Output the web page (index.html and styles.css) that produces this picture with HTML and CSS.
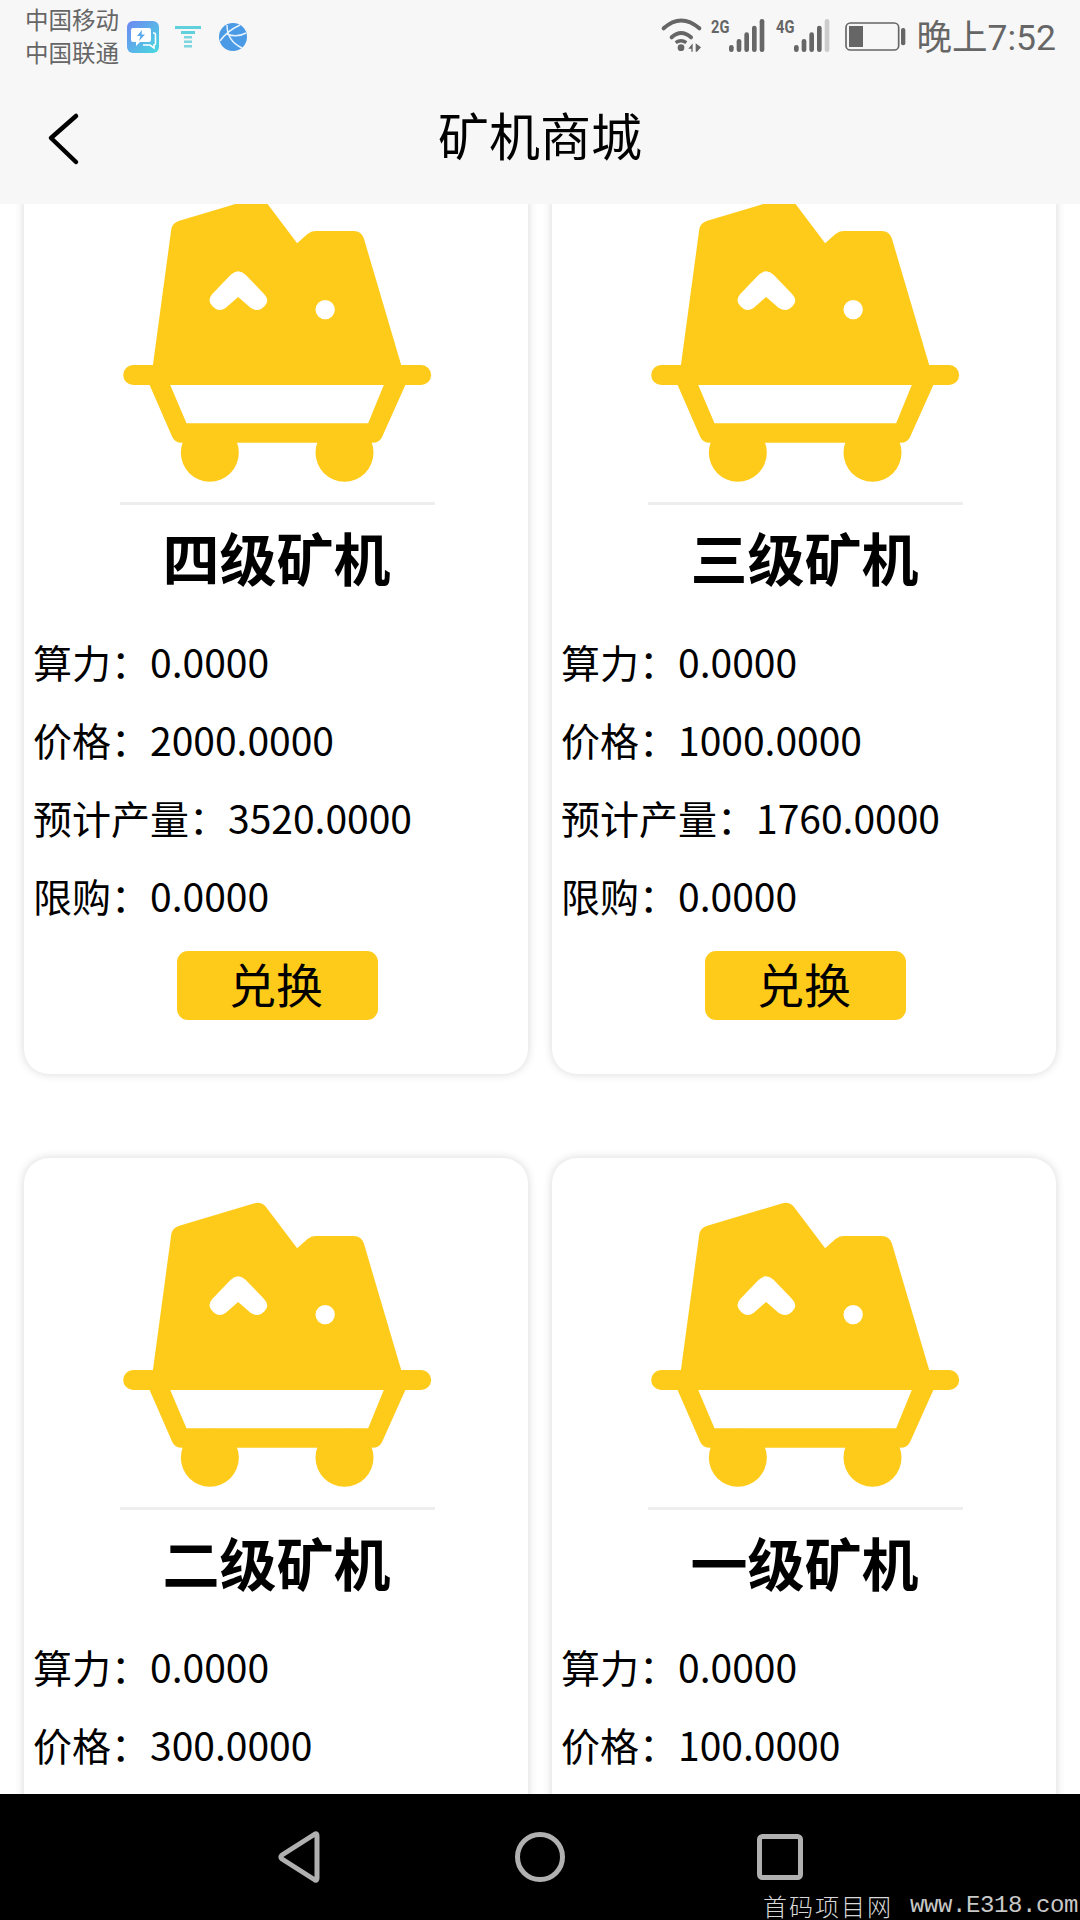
FILE: index.html
```html
<!DOCTYPE html>
<html lang="zh-CN">
<head>
<meta charset="utf-8">
<title>矿机商城</title>
<link rel="stylesheet" href="styles.css">
</head>
<body>
<svg class="defs" aria-hidden="true">
  <defs>
    <linearGradient id="chatGrad" x1="0" y1="0" x2="1" y2="1">
      <stop offset="0" stop-color="#6f86f2"/>
      <stop offset="1" stop-color="#47dcdf"/>
    </linearGradient>
  </defs>
  <symbol id="cart" viewBox="-7.5 0 1080 981">
    <path fill="#ffcb1b" d="M156 580 L212 165 Q214 145 234 138 L462 70 Q482 64 496 80 L590 205 L620 178 Q632 168 645 168 L760 168 Q782 168 790 190 L905 580 Z"/>
    <rect fill="#ffcb1b" x="68" y="570" width="924" height="60" rx="30"/>
    <path fill="#ffcb1b" d="M145 625 L215 785 Q222 803 245 803 L815 803 Q838 803 845 785 L917 625 L852 625 L803 745 L258 745 L207 625 Z"/>
    <circle fill="#ffcb1b" cx="328" cy="833" r="87"/>
    <circle fill="#ffcb1b" cx="732" cy="833" r="87"/>
    <path fill="#fff" d="M413 366 L376 398 Q354 414 336 394 Q318 376 336 356 L390 300 Q413 278 436 300 L490 356 Q510 376 492 394 Q474 414 450 398 Z"/>
    <circle fill="#fff" cx="674" cy="404" r="29"/>
  </symbol>
</svg>

<header class="top">
  <div class="status">
    <div class="carriers">
      <span>中国移动</span>
      <span>中国联通</span>
    </div>
    <svg class="app-chat" viewBox="0 0 32 32">
      <rect width="32" height="32" rx="6" fill="url(#chatGrad)"/>
      <path fill="#fff" d="M6 7 H22 Q24 7 24 9 V19 Q24 21 22 21 H13 L9 25 V21 H6 Q4 21 4 19 V9 Q4 7 6 7 Z"/>
      <path fill="none" stroke="#fff" stroke-width="1.6" d="M26 12 H27 Q28.500 12 28.500 14 V22 Q28.500 24 27 24 V27 L23 24 H16"/>
      <path fill="#5aa8ee" d="M15 9 L10 15 H13.500 L12 20 L18 13.500 H14.500 Z"/>
    </svg>
    <svg class="app-filter" viewBox="0 0 26 24">
      <rect x="0" y="1" width="26" height="3" fill="#5fd0dc"/>
      <rect x="6" y="6" width="14" height="3" fill="#5fd0dc"/>
      <rect x="9" y="11" width="8" height="2.500" fill="#7bd6e0"/>
      <rect x="9" y="15.500" width="8" height="2.500" fill="#7bd6e0"/>
      <rect x="9" y="20" width="8" height="2.500" fill="#7bd6e0"/>
    </svg>
    <svg class="app-globe" viewBox="0 0 28 28">
      <circle cx="14" cy="14" r="14" fill="#4a9ae6"/>
      <path fill="none" stroke="#e6f2fc" stroke-width="1.500" d="M1 18 Q8 8 21 2 M8 2 Q8 18 23 25 M8 11 Q18 15 27 10"/>
    </svg>
    <svg class="sys-icons" viewBox="0 0 780 150">
      <g fill="none" stroke="#666" stroke-width="12" stroke-linecap="round">
        <path d="M38 55 Q90 8 145 55"/>
        <path d="M62 82 Q90 56 120 82"/>
      </g>
      <path fill="none" stroke="#666" stroke-width="10" d="M74 98 Q90 86 106 98"/>
      <circle cx="90" cy="113" r="10" fill="#666"/>
      <path fill="#666" d="M112 116 L125 100 V125 H121 V116 Z M134 100 L150 112 L138 125 H134 Z"/>
      <text class="net" x="180" y="68" textLength="55" lengthAdjust="spacingAndGlyphs">2G</text>
      <g stroke="#666" stroke-width="14" stroke-linecap="round">
        <path d="M241 112 V119"/>
        <path d="M264 94 V119"/>
        <path d="M287 74 V119"/>
        <path d="M310 54 V119"/>
        <path d="M333 34 V119"/>
      </g>
      <text class="net" x="375" y="68" textLength="55" lengthAdjust="spacingAndGlyphs">4G</text>
      <g stroke="#666" stroke-width="14" stroke-linecap="round">
        <path d="M436 112 V119"/>
        <path d="M459 94 V119"/>
        <path d="M482 74 V119"/>
        <path d="M505 54 V119"/>
      </g>
      <path stroke="#ccc" stroke-width="14" stroke-linecap="round" d="M528 34 V119"/>
      <rect x="585" y="39" width="158" height="81" rx="13" fill="none" stroke="#666" stroke-width="5"/>
      <rect x="594" y="48" width="42" height="63" fill="#666"/>
      <rect x="750" y="54" width="13" height="52" rx="6" fill="#666"/>
    </svg>
    <span class="clock">晚上7:52</span>
  </div>
  <div class="titlebar">
    <svg class="back" viewBox="0 0 36 58">
      <path d="M30 5 L5 27 L30 51" fill="none" stroke="#000" stroke-width="4.500" stroke-linecap="round" stroke-linejoin="round"/>
    </svg>
    <h1 class="page-title">矿机商城</h1>
  </div>
</header>

<main class="shop">
  <div class="grid">
    <article class="card">
      <svg class="cart"><use href="#cart"/></svg>
      <div class="rule"></div>
      <h2 class="name">四级矿机</h2>
      <p class="row">算力：0.0000</p>
      <p class="row">价格：2000.0000</p>
      <p class="row">预计产量：3520.0000</p>
      <p class="row">限购：0.0000</p>
      <button class="buy">兑换</button>
    </article>
    <article class="card">
      <svg class="cart"><use href="#cart"/></svg>
      <div class="rule"></div>
      <h2 class="name">三级矿机</h2>
      <p class="row">算力：0.0000</p>
      <p class="row">价格：1000.0000</p>
      <p class="row">预计产量：1760.0000</p>
      <p class="row">限购：0.0000</p>
      <button class="buy">兑换</button>
    </article>
    <article class="card">
      <svg class="cart"><use href="#cart"/></svg>
      <div class="rule"></div>
      <h2 class="name">二级矿机</h2>
      <p class="row">算力：0.0000</p>
      <p class="row">价格：300.0000</p>
    </article>
    <article class="card">
      <svg class="cart"><use href="#cart"/></svg>
      <div class="rule"></div>
      <h2 class="name">一级矿机</h2>
      <p class="row">算力：0.0000</p>
      <p class="row">价格：100.0000</p>
    </article>
  </div>
</main>

<nav class="navbar">
  <svg class="nav-back" viewBox="0 0 44 54">
    <path d="M38 4 Q40 3 40 6 V48 Q40 51 38 50 L5 29 Q3 27 5 25 Z" fill="none" stroke="#b0b0b0" stroke-width="5" stroke-linejoin="round"/>
  </svg>
  <svg class="nav-home" viewBox="0 0 50 50">
    <circle cx="25" cy="25" r="22.500" fill="none" stroke="#b0b0b0" stroke-width="5"/>
  </svg>
  <svg class="nav-recent" viewBox="0 0 46 46">
    <rect x="2.500" y="2.500" width="41" height="41" rx="3" fill="none" stroke="#b0b0b0" stroke-width="5"/>
  </svg>
  <div class="watermark"><span class="wm-cn">首码项目网</span><span class="wm-en">www.E318.com</span></div>
</nav>
</body>
</html>
```

FILE: styles.css
```css
* { box-sizing: border-box; }
html, body { margin: 0; padding: 0; }
body {
  width: 1080px;
  height: 1920px;
  display: flex;
  flex-direction: column;
  overflow: hidden;
  background: #fff;
  color: #000;
  font-family: "Noto Sans CJK SC", "Noto Sans", sans-serif;
}
.defs { width: 0; height: 0; display: block; }

/* top bars */
.top {
  flex: none;
  height: 204px;
  background: #f7f7f7;
  position: relative;
  z-index: 2;
}
.status {
  height: 74px;
  display: flex;
  align-items: flex-start;
  padding: 0 24px 0 25px;
}
.carriers {
  display: flex;
  flex-direction: column;
  margin-top: 3px;
  font-size: 23.5px;
  line-height: 33px;
  color: #666;
  white-space: nowrap;
  width: 102px;
}
.app-chat { width: 32px; height: 32px; margin-top: 21px; flex: none; }
.app-filter { width: 26px; height: 24px; margin: 25px 0 0 16px; flex: none; }
.app-globe { width: 28px; height: 28px; margin: 23px 0 0 18px; flex: none; }
.sys-icons { width: 260px; height: 50px; margin: 10px 0 0 auto; flex: none; }
.net {
  font-family: Roboto, sans-serif;
  font-weight: 700;
  font-size: 56px;
  fill: #666;
}
.clock {
  margin-left: 6px;
  font-size: 35.5px;
  line-height: 76px;
  color: #666;
  white-space: nowrap;
  font-family: Roboto, "Noto Sans CJK SC", sans-serif;
}
.titlebar {
  height: 130px;
  display: flex;
  align-items: center;
  justify-content: center;
  position: relative;
}
.back {
  position: absolute;
  left: 46px;
  top: 37px;
  width: 36px;
  height: 58px;
}
.page-title {
  margin: 0 0 10px 0;
  font-size: 51px;
  font-weight: 400;
  line-height: 70px;
}

/* list */
.shop {
  flex: 1;
  min-height: 0;
  overflow: hidden;
  background: #fff;
}
.grid {
  display: grid;
  grid-template-columns: 504px 504px;
  column-gap: 24px;
  row-gap: 84px;
  padding: 0 24px;
  margin-top: -51px;
}
.card {
  height: 921px;
  background: #fff;
  border-radius: 25px;
  box-shadow: 0 0 10px rgba(0, 0, 0, 0.16);
  padding: 22px 0 0 3px;
  display: flex;
  flex-direction: column;
}
.cart {
  width: 360px;
  height: 327px;
  align-self: center;
  flex: none;
}
.rule {
  width: 315px;
  height: 3px;
  background: #eeeeee;
  align-self: center;
  flex: none;
}
.name {
  margin: 16px 2px 31px 0;
  font-size: 57px;
  font-weight: 700;
  line-height: 70px;
  text-align: center;
}
.row {
  margin: 0;
  padding-left: 6px;
  font-size: 39px;
  line-height: 78px;
  white-space: nowrap;
}
.buy {
  align-self: center;
  width: 201px;
  height: 69px;
  margin-top: 17px;
  padding: 0 3px 6px 0;
  border: 0;
  border-radius: 11px;
  background: #ffcb1b;
  color: #000;
  font-family: inherit;
  font-size: 47px;
  line-height: 63px;
}

/* navigation */
.navbar {
  flex: none;
  height: 126px;
  background: #000;
  position: relative;
  z-index: 2;
  display: flex;
  align-items: flex-start;
}
.nav-back { width: 44px; height: 54px; margin: 36px 0 0 277px; }
.nav-home { width: 50px; height: 50px; margin: 38px 0 0 194px; }
.nav-recent { width: 46px; height: 46px; margin: 40px 0 0 192px; }
.watermark {
  position: absolute;
  left: 763px;
  top: 98px;
  color: #d8d8d8;
  font-size: 24px;
  line-height: 28px;
  white-space: nowrap;
  display: flex;
}
.wm-cn { letter-spacing: 2px; font-weight: 300; width: 147px; }
.wm-en { font-family: "Liberation Mono", monospace; letter-spacing: -0.4px; font-weight: 400; color: #c8c8c8; }
```
